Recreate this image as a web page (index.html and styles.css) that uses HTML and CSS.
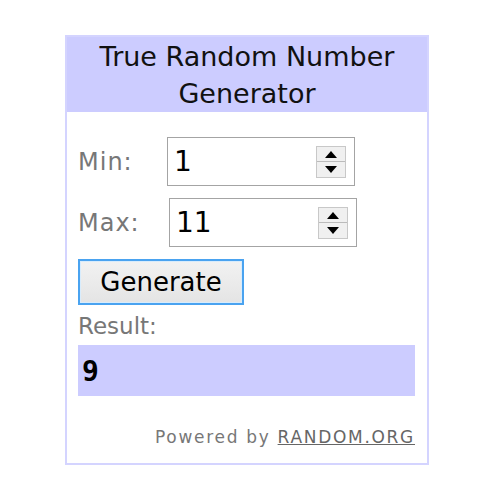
FILE: index.html
```html
<!DOCTYPE html>
<html>
	<head>
		<meta charset="UTF-8">
		<title>True Random Number Generator</title>
		<link rel="stylesheet" href="styles.css">
	</head>
	<body>
		<div class="widget">
			<div class="head">True Random Number Generator</div>
			<div class="body">
				<p class="row">
					<span class="lbl">Min:</span>
					<span class="num"><span class="val">1</span><span class="spin"><i class="up"></i><i class="down"></i></span></span>
				</p>
				<p class="row">
					<span class="lbl">Max:</span>
					<span class="num"><span class="val">11</span><span class="spin"><i class="up"></i><i class="down"></i></span></span>
				</p>
				<p class="go">
					<span class="btn">Generate</span>
				</p>
				<p class="res-lbl">Result:</p>
				<div class="res">9</div>
				<p class="foot">Powered by <a href="#">RANDOM.ORG</a></p>
			</div>
		</div>
	</body>
</html>
```

FILE: styles.css
```css
*{margin: 0;padding: 0;}
body{font-family: "DejaVu Sans", Verdana, sans-serif;background: #fff;}
.widget{
	width: 360px;
	margin: 35px 0 0 65px;
	border: 2px solid #d4d4ff;
}
.head{
	background: #ccf;
	text-align: center;
	font-size: 27px;
	line-height: 37px;
	padding: 1px 10px 0;
	color: #111;
}
.body{
	padding: 25px 12px 16px 11px;
}
.row{
	display: flex;
	align-items: center;
	margin-bottom: 12px;
}
.lbl{
	font-size: 24px;
	color: #777;
	width: 89px;
	letter-spacing: 1px;
}
.row:nth-child(2) .lbl{width: 91px;}
.num{
	width: 172px;
	height: 47px;
	border: 1px solid #a4a4a4;
	display: flex;
	align-items: center;
	justify-content: space-between;
	padding: 0 8px 0 6px;
	box-sizing: content-box;
	background: #fff;
}
.val{
	font-size: 28px;
	color: #000;
}
.spin{
	width: 28px;
	height: 30px;
	border: 1px solid #c8c8c8;
	background: #e8e8e8;
	display: flex;
	flex-direction: column;
}
.spin i{
	flex: 1;
	position: relative;
	border-bottom: 1px solid #bbb;
	background: #f0f0f0;
}
.spin i.down{border-bottom: 0;}
.spin i::after{
	content: "";
	position: absolute;
	left: 8px;
	top: 4px;
	border-left: 6px solid transparent;
	border-right: 6px solid transparent;
}
.spin i.up::after{border-bottom: 7px solid #000;}
.spin i.down::after{border-top: 7px solid #000;}
.go{margin-top: 1px;}
.btn{
	display: inline-block;
	width: 162px;
	height: 42px;
	line-height: 42px;
	text-align: center;
	font-size: 26px;
	color: #000;
	border: 2px solid #4aa3f0;
	background: linear-gradient(#f2f2f2, #e4e4e4);
	box-shadow: inset 0 0 0 1px #d8ecfc;
}
.res-lbl{
	font-size: 23px;
	color: #777;
	margin-top: 6px;
	line-height: 30px;
}
.res{
	background: #ccf;
	height: 51px;
	line-height: 54px;
	font-family: "DejaVu Sans Mono", monospace;
	font-weight: bold;
	font-size: 28px;
	color: #000;
	padding-left: 4px;
	margin-top: 4px;
}
.foot{
	text-align: right;
	font-size: 17px;
	color: #777;
	margin-top: 31px;
	letter-spacing: 1.7px;
}
.foot a{color: #666;}
```
